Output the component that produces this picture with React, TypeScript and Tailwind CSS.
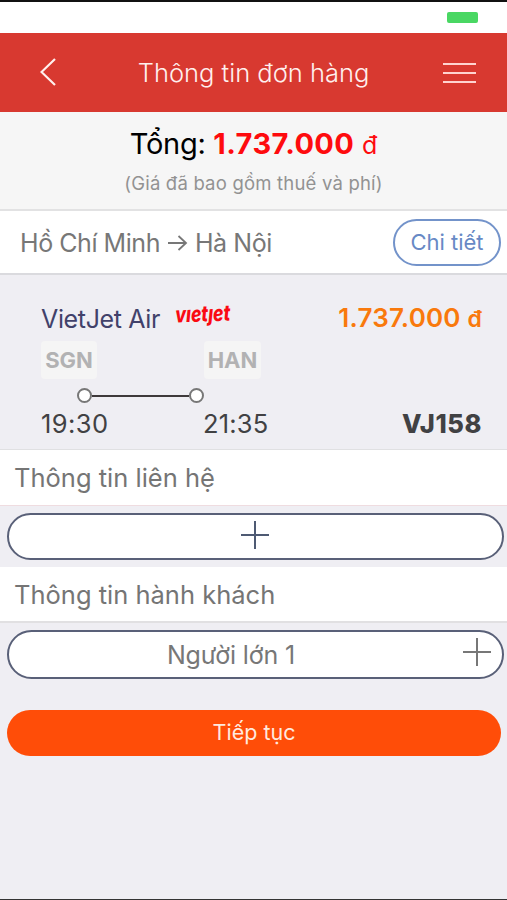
import React from "react";

function PlusIcon({ className }: { className: string }) {
  return (
    <svg viewBox="0 0 28 28" className={className} fill="none" stroke="currentColor" strokeWidth="2">
      <path d="M14 0v28M0 14h28" />
    </svg>
  );
}

function VietjetLogo() {
  return (
    <svg viewBox="0 0 64 40" className="ml-[14px] h-10 w-16 overflow-visible" aria-label="vietjet">
      <text
        x="1.5"
        y="24.5"
        textLength="55"
        lengthAdjust="spacingAndGlyphs"
        transform="rotate(-2 1 25)"
        className="fill-[#fa0a12] font-['Inter',sans-serif] text-[22px] font-extrabold italic"
      >
        vıetȷet
      </text>
    </svg>
  );
}

function SectionTitle({ children, className }: { children: React.ReactNode; className: string }) {
  return (
    <h2 className={`flex items-center bg-white pl-[14px] text-[25.5px] leading-none text-[#757575] ${className}`}>
      {children}
    </h2>
  );
}

function StatusBar() {
  return (
    <div className="flex h-[33px] shrink-0 justify-end border-t-2 border-[#111] bg-white pt-[10px] pr-[29px]">
      <div className="h-[11px] w-[31px] rounded-[2px] bg-[#49d763]" />
    </div>
  );
}

function Header() {
  return (
    <header className="grid h-[79px] shrink-0 grid-cols-[76px_1fr_76px] items-center bg-[#d83930] text-[#fff0ee]">
      <svg viewBox="0 0 16 28" className="mb-px ml-10 h-7 w-4" fill="none" stroke="currentColor" strokeWidth="2.2">
        <path d="M15 1L1.5 14L15 27" />
      </svg>
      <h1 className="text-center text-[25.5px] leading-none font-light whitespace-nowrap">Thông tin đơn hàng</h1>
      <div className="ml-3 flex w-[33px] flex-col gap-[7px]">
        <span className="h-[2px] bg-[#ffd4d0]" />
        <span className="h-[2px] bg-[#ffd4d0]" />
        <span className="h-[2px] bg-[#ffd4d0]" />
      </div>
    </header>
  );
}

function Total() {
  return (
    <section className="flex h-[99px] shrink-0 flex-col items-center border-b-2 border-[#e2e2e3] bg-[#f6f6f6] pt-4 whitespace-nowrap">
      <p className="text-[29px] leading-8 tracking-[-0.3px] text-black">
        Tổng: <b className="font-bold tracking-[0.4px] text-[#fe0b0e]">1.737.000</b>{" "}
        <span className="text-[25px] text-[#fe0b0e]">đ</span>
      </p>
      <p className="mt-[12px] text-[18.5px] leading-5 tracking-[0.2px] text-[#929292]">(Giá đã bao gồm thuế và phí)</p>
    </section>
  );
}

function Route() {
  return (
    <section className="flex h-[64px] shrink-0 items-center justify-between border-b-2 border-[#dadade] bg-white pr-[6px] pl-5">
      <div className="flex items-center pt-[2px] text-[25px] leading-none tracking-[-0.45px] whitespace-nowrap text-[#777]">
        <span>Hồ Chí Minh</span>
        <svg viewBox="0 0 20 20" className="mr-[7px] ml-[8px] h-5 w-5" fill="none" stroke="currentColor" strokeWidth="1.8">
          <path d="M0 10h18M10.5 3l7.5 7l-7.5 7" />
        </svg>
        <span>Hà Nội</span>
      </div>
      <button className="h-[47px] w-[108px] rounded-full border-2 border-[#7393ca] text-[22px] leading-none text-[#6889c5]">
        Chi tiết
      </button>
    </section>
  );
}

function Flight() {
  return (
    <section className="flex h-[175px] shrink-0 flex-col border-b border-[#e0e0e2] pt-[27px] pr-[25px] pl-[41px] whitespace-nowrap">
      <div className="flex h-8 items-center justify-between">
        <div className="flex items-center">
          <span className="pt-px text-[25px] leading-8 tracking-[-0.35px] text-[#41416a]">VietJet Air</span>
          <VietjetLogo />
        </div>
        <span className="pt-px text-[26px] leading-8 font-semibold tracking-[0.2px] text-[#f9790c]">
          1.737.000 <span className="text-[23px]">đ</span>
        </span>
      </div>
      <div className="mt-[7px] flex h-[38px] text-[22px] font-bold text-[#b2b2b3]">
        <span className="flex w-[56px] items-center justify-center rounded-[4px] bg-[#f5f5f5]">SGN</span>
        <span className="ml-[107px] flex w-[57px] items-center justify-center rounded-[4px] bg-[#f5f5f5]">HAN</span>
      </div>
      <div className="mt-[9px] ml-[36px] flex w-[127px] items-center">
        <span className="h-[15px] w-[15px] rounded-full border-2 border-[#777] bg-white" />
        <span className="h-[2px] flex-1 bg-[#3e393a]" />
        <span className="h-[15px] w-[15px] rounded-full border-2 border-[#777] bg-white" />
      </div>
      <div className="mt-[5px] flex h-8 items-center text-[25.5px] leading-8 text-[#414143]">
        <span className="w-[162px] tracking-[0.4px]">19:30</span>
        <span className="tracking-[0.2px]">21:35</span>
        <span className="ml-auto font-extrabold tracking-[0.6px]">VJ158</span>
      </div>
    </section>
  );
}

export default function App() {
  return (
    <main className="flex h-[900px] w-[507px] flex-col overflow-hidden border-b border-[#333] bg-[#efeef3] font-['Inter','Liberation_Sans',sans-serif]">
      <StatusBar />
      <Header />
      <Total />
      <Route />
      <Flight />
      <SectionTitle className="h-[56px] border-b border-[#efdce0]">Thông tin liên hệ</SectionTitle>
      <button className="mt-[7px] mr-[3px] ml-[7px] flex h-[47px] shrink-0 items-center justify-center rounded-full border-2 border-[#596078] bg-white text-[#4e5a73]">
        <PlusIcon className="mr-px mb-[3px] h-7 w-7" />
      </button>
      <SectionTitle className="mt-[7px] h-[56px] border-b-2 border-[#e1e0e2] pt-[2px]">Thông tin hành khách</SectionTitle>
      <button className="mt-[7px] mr-[3px] ml-[7px] grid h-[49px] shrink-0 grid-cols-[1fr_48px] items-center rounded-full border-2 border-[#596078] bg-white text-[#777]">
        <span className="pt-[2px] pr-px text-center text-[25px] leading-none tracking-[-0.15px]">Người lớn 1</span>
        <PlusIcon className="mb-[5px] ml-[9px] h-7 w-7" />
      </button>
      <button className="mt-[31px] mr-[6px] ml-[7px] h-[46px] shrink-0 rounded-full bg-[#ff4d08] text-[21.5px] leading-none text-[#ffe9df]">
        Tiếp tục
      </button>
    </main>
  );
}
